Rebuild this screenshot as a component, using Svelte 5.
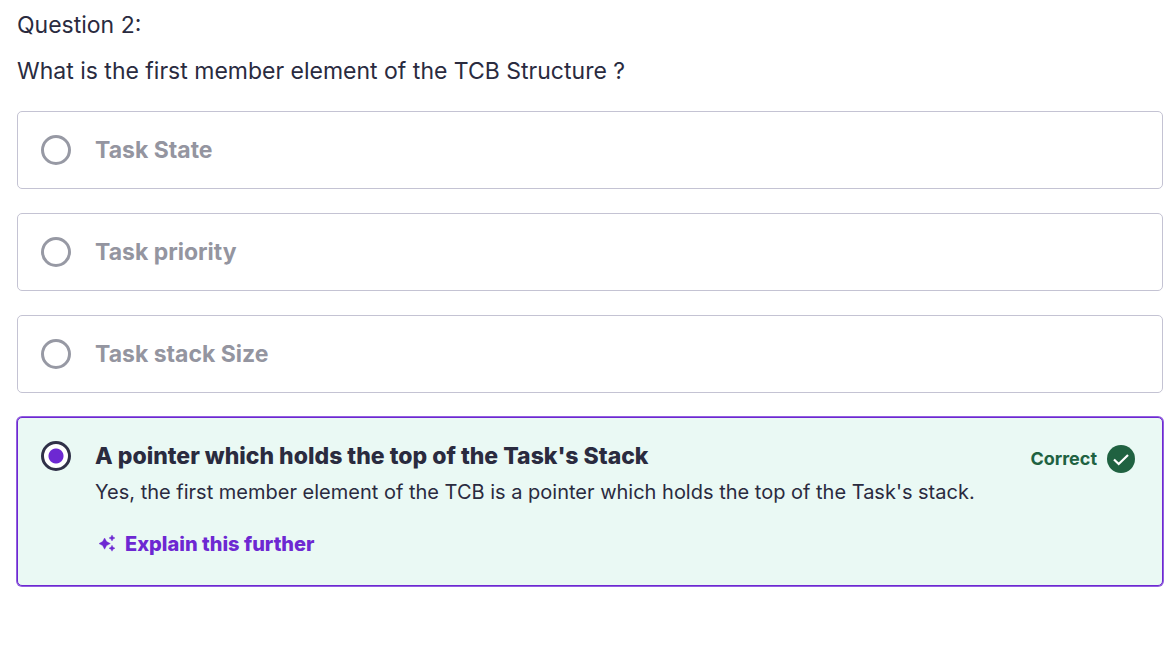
<script>
  const question = 'What is the first member element of the TCB Structure ?';
  const answers = [
    { id: 'state', label: 'Task State' },
    { id: 'priority', label: 'Task priority' },
    { id: 'size', label: 'Task stack Size' },
    {
      id: 'pointer',
      label: "A pointer which holds the top of the Task's Stack",
      note: "Yes, the first member element of the TCB is a pointer which holds the top of the Task's stack.",
      correct: true
    }
  ];
  let selected = $state('pointer');
</script>

<main>
  <p class="number">Question 2:</p>
  <p class="question">{question}</p>
  <div class="answers" role="radiogroup" aria-label={question}>
    {#each answers as answer}
      <div class="answer" class:correct={answer.correct}>
        <input type="radio" name="answer" id={answer.id} value={answer.id} bind:group={selected} />
        <div class="body">
          <label for={answer.id}>{answer.label}</label>
          {#if answer.correct}
            <p class="note">{answer.note}</p>
            <button type="button">
              <svg width="20" height="20" viewBox="0 0 20 20" aria-hidden="true">
                <path d="M7.6 4 9.6 7.6 13.3 9.6 9.6 11.6 7.6 15.2 5.6 11.6 2 9.6 5.6 7.6ZM15 1 16 3 18 4 16 5 15 7 14 5 12 4 14 3ZM15 11.2 16 13.2 18 14.2 16 15.2 15 17.2 14 15.2 12 14.2 14 13.2Z" fill="currentColor" stroke="currentColor" stroke-width=".4" />
              </svg>
              Explain this further
            </button>
          {/if}
        </div>
        {#if answer.correct}
          <div class="verdict">
            <span>Correct</span>
            <svg width="28" height="28" viewBox="0 0 28 28" aria-hidden="true">
              <circle cx="14" cy="14" r="14" fill="#206241" />
              <path d="m7 14.5 4.7 4.5 9.3-9" fill="none" stroke="#fff" stroke-width="2.2" />
            </svg>
          </div>
        {/if}
      </div>
    {/each}
  </div>
</main>

<style>
  :global(body) {
    margin: 0;
    background: #fff;
  }
  main {
    padding: 8px 13px 24px 17px;
    color: #2a2b3f;
    font-family: Inter, 'Liberation Sans', sans-serif;
    font-size: 23px;
    line-height: 34px;
  }
  p {
    margin: 0;
  }
  .question {
    margin-top: 12px;
  }
  .answers {
    display: grid;
    gap: 24px;
    margin-top: 23px;
  }
  .answer {
    display: flex;
    align-items: flex-start;
    gap: 24px;
    padding: 22px 23px;
    border: 1px solid #c4c3d3;
    border-radius: 5px;
  }
  input {
    appearance: none;
    flex: none;
    width: 30px;
    height: 30px;
    margin: 1px 0;
    border: 3px solid #9799a4;
    border-radius: 50%;
    background: #fff;
  }
  input:checked {
    border-color: #303148;
    background: radial-gradient(circle, #6d28d2 7px, #fff 8px);
  }
  .body {
    flex: 1;
    min-width: 0;
  }
  label {
    display: block;
    height: 32px;
    color: #9495a0;
    font-weight: 700;
    font-size: 23px;
    line-height: 32px;
  }
  .correct {
    border-color: #6d28d2;
    background: #eaf9f4;
    box-shadow: 0 0 0 1px #9360de;
  }
  .correct label {
    color: #2a2b3f;
    font-weight: 800;
  }
  .note {
    margin-top: 4px;
    font-size: 20px;
    line-height: 32px;
  }
  button {
    display: flex;
    align-items: center;
    gap: 8px;
    margin: 20px 0 3px;
    padding: 0 2px;
    border: 0;
    background: none;
    color: #6d28d2;
    font: 800 20px/32px Inter, 'Liberation Sans', sans-serif;
  }
  .verdict {
    display: flex;
    align-items: center;
    gap: 10px;
    padding: 5px 4px 0 0;
    color: #206241;
    font-weight: 700;
    font-size: 18px;
    line-height: 28px;
  }
</style>
